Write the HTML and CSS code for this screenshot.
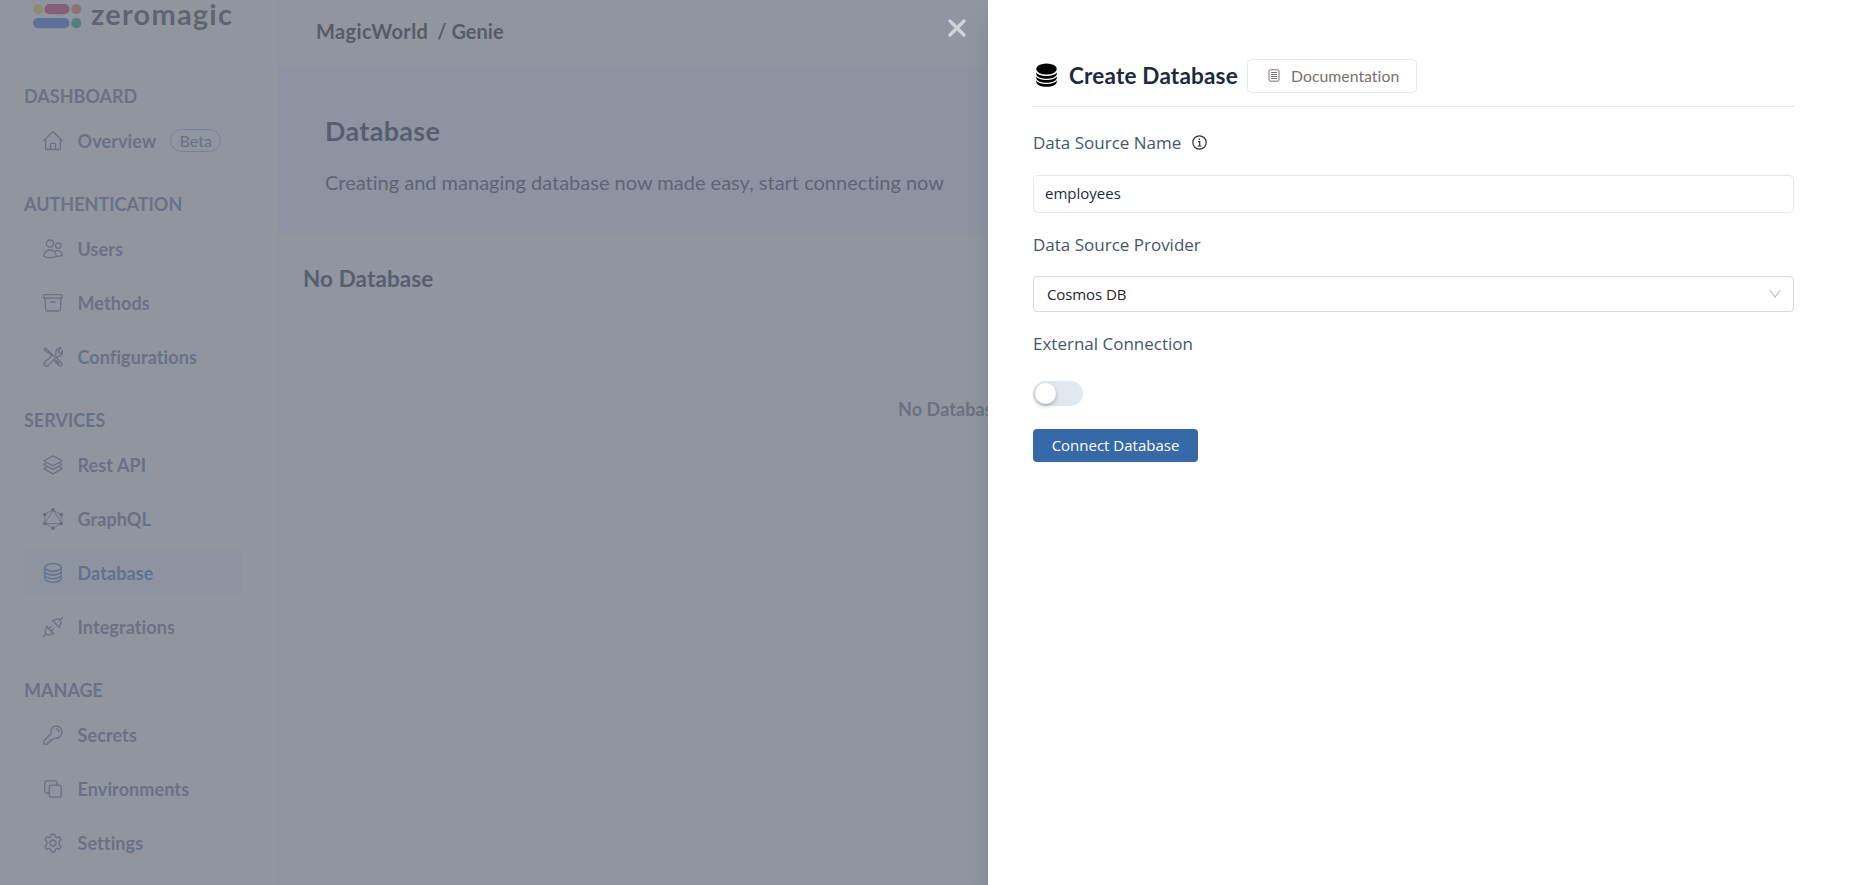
FILE: index.html
```html
<!DOCTYPE html>
<html lang="en">
<head>
    <meta charset="UTF-8">
    <meta name="viewport" content="width=device-width, initial-scale=1.0">
    <title>Database - zeromagic</title>
    <link rel="stylesheet" href="styles.css">
</head>
<body>

<div class="layout">
    <aside class="sidebar">
        <div class="logo">
            <svg width="49" height="25" viewBox="0 0 49 25">
                <circle cx="5.2" cy="5.2" r="5.1" fill="#f2d544"/>
                <rect x="11.5" y="0" width="25" height="10.3" rx="5.1" fill="#e0265e"/>
                <circle cx="43.3" cy="5.2" r="5.1" fill="#f07a3c"/>
                <rect x="0" y="14" width="36.5" height="10.3" rx="5.1" fill="#2f6fed"/>
                <circle cx="43.3" cy="19.1" r="5.1" fill="#14a085"/>
            </svg>
            <span class="logo-text">zeromagic</span>
        </div>

        <nav>
            <div class="nav-section">
                <h6>DASHBOARD</h6>
                <a class="nav-item">
                    <svg class="icon" viewBox="0 0 20 20"><path d="M.8 9.6 9.2 1.2a1.1 1.1 0 0 1 1.6 0l8.4 8.4M2.6 8v9.3c0 .7.5 1.2 1.2 1.2h12.4c.7 0 1.2-.5 1.2-1.2V8M7.5 18.5v-5.2c0-.6.4-1 1-1h3c.6 0 1 .4 1 1v5.2"/></svg>
                    Overview <span class="beta">Beta</span>
                </a>
            </div>
            <div class="nav-section">
                <h6>AUTHENTICATION</h6>
                <a class="nav-item">
                    <svg class="icon" viewBox="0 0 20 20"><circle cx="7" cy="4.6" r="3.6"/><circle cx="15.3" cy="6.6" r="2.7"/><path d="M.8 17.2c0-3.8 2.8-6.2 6.2-6.2s6.2 2.4 6.2 6.2c-1.800 1-3.900 1.500-6.200 1.500s-4.400-.5-6.200-1.500zM12 12.400c3.200-2 7.200 0 7.200 3.900-1.700.8-3.700 1.200-6 1"/></svg>
                    Users
                </a>
                <a class="nav-item">
                    <svg class="icon" viewBox="0 0 20 20"><rect x=".8" y="1.700" width="18.400" height="3.500" rx=".9"/><path d="m2 5.200.6 11c.1 1.100.8 1.800 1.900 1.800h11c1.100 0 1.800-.7 1.900-1.800l.6-11M7.700 9h4.600"/></svg>
                    Methods
                </a>
                <a class="nav-item">
                    <svg class="icon" viewBox="0 0 20 20"><path d="m11 9.600 2-2.200c-.9-3.800 1.700-7.200 5.200-6.300l-2.900 2.900.6 1.900 1.900.6 1.600-2.900c1 3.300-1.700 6.500-5.300 5.900l-9 8.900c-2.500 2.300-5.500-.7-3.400-3.100L8.600 9M8.600 8.400 5.300 5.200 4.900 3.500 2.600.9.900 2.600l2.500 2.300 1.800.4M11.600 13.800l4.300 4.400c2 1.700 4.300-.8 2.500-2.500L13.700 11M13 13.300l3 3M3.200 16.600h.1M5 3.500l5 5"/></svg>
                    Configurations
                </a>
            </div>
            <div class="nav-section">
                <h6>SERVICES</h6>
                <a class="nav-item">
                    <svg class="icon" viewBox="0 0 20 20"><path d="m10 .9 9.200 4.900-9.200 4.900L.8 5.800zM3.900 7.800.8 9.500l9.200 4.900 9.200-4.900-3.100-1.700M3.900 12 .8 13.900l9.200 5 9.200-5-3.100-1.900"/></svg>
                    Rest API
                </a>
                <a class="nav-item">
                    <svg class="icon icon-graph" viewBox="0 0 20 22"><path d="m10 2 8.200 4.600v9L10 20.200l-8.200-4.600v-9zM10 2 1.800 15.600h16.400z"/><g class="dots"><circle cx="10" cy="2" r="1.900"/><circle cx="18.200" cy="6.600" r="1.900"/><circle cx="18.200" cy="15.600" r="1.900"/><circle cx="10" cy="20.200" r="1.900"/><circle cx="1.800" cy="15.600" r="1.900"/><circle cx="1.800" cy="6.600" r="1.900"/></g></svg>
                    GraphQL
                </a>
                <a class="nav-item active">
                    <svg class="icon" viewBox="0 0 20 20"><ellipse cx="10" cy="4.500" rx="8.200" ry="3.800"/><path d="M1.800 4.500v11c0 2.100 3.700 3.800 8.200 3.800s8.200-1.700 8.200-3.800v-11M1.800 8.200c0 2.100 3.700 3.800 8.200 3.800s8.200-1.700 8.200-3.800M1.800 11.900c0 2.100 3.700 3.800 8.200 3.800s8.200-1.700 8.200-3.800"/></svg>
                    Database
                </a>
                <a class="nav-item">
                    <svg class="icon" viewBox="0 0 20 20"><path d="m.5 19.500 2.700-2.700M19.500.5l-2.700 2.700M3.300 9.300l7.400 7.400M9.300 3.300l7.400 7.400M4.400 10.400l-1.300 1.300a3.600 3.600 0 0 0 5.200 5.200l1.300-1.300M10.400 4.400l1.300-1.300a3.600 3.600 0 0 1 5.200 5.200l-1.300 1.300M5.800 11.800l2-2M8.200 14.200l2-2"/></svg>
                    Integrations
                </a>
            </div>
            <div class="nav-section">
                <h6>MANAGE</h6>
                <a class="nav-item">
                    <svg class="icon" viewBox="0 0 20 20"><path d="M13.500.8a5.700 5.700 0 0 0-5.600 7c.1.600 0 1.100-.4 1.500l-6 6c-.5.500-.7.900-.7 1.500v2.400h4.100v-2h2.100v-2h2l1.600-1.600c.4-.4.9-.5 1.500-.4A5.700 5.700 0 1 0 13.500.8zM13.200 4c1.800.1 2.800 1.200 2.900 2.900"/></svg>
                    Secrets
                </a>
                <a class="nav-item">
                    <svg class="icon" viewBox="0 0 20 20"><rect x="6.200" y="6.200" width="12" height="12" rx="2.200"/><path d="M6.200 14H4c-1.300 0-2.200-.9-2.200-2.200V4c0-1.300.9-2.200 2.200-2.200h7.800c1.300 0 2.200.9 2.200 2.200v2.200"/></svg>
                    Environments
                </a>
                <a class="nav-item">
                    <svg class="icon" viewBox="0 0 20 20"><circle cx="10" cy="10" r="3"/><path d="M8.300 1.200h3.400l.5 2.400 1.700 1 2.400-.8 1.700 2.900-1.800 1.700v3.200l1.800 1.700-1.700 2.900-2.400-.8-1.700 1-.5 2.400H8.300l-.5-2.400-1.700-1-2.400.8L2 13.300l1.800-1.700V8.400L2 6.700l1.700-2.900 2.400.8 1.700-1z"/></svg>
                    Settings
                </a>
            </div>
        </nav>
    </aside>

    <main class="main">
        <header class="topbar"><span>MagicWorld</span><span class="project">/ Genie</span></header>
        <section class="hero">
            <h1>Database</h1>
            <p>Creating and managing database now made easy, start connecting now</p>
        </section>
        <section class="content">
            <h2>No Database</h2>
            <p class="empty">No Database</p>
        </section>
    </main>
</div>

<div class="overlay">
    <button class="close" aria-label="Close">
        <svg width="18" height="18" viewBox="0 0 18 18"><path d="m2 2 14 14M16 2 2 16"/></svg>
    </button>
    <div class="drawer">
        <div class="drawer-header">
            <svg class="db-icon" width="21" height="25" viewBox="0 0 21 25">
                <ellipse cx="10.500" cy="6" rx="10.300" ry="5.600"/>
                <path d="M.2 9.200c2 5 18.600 5 20.600 0v2c-1.500 6-19.100 6-20.600 0zM.2 13.200c2 5 18.600 5 20.600 0v2c-1.500 6-19.100 6-20.600 0zM.2 17.200c2 5 18.600 5 20.600 0v2c-1.500 6.200-19.100 6.200-20.600 0z"/>
            </svg>
            <h3>Create Database</h3>
            <a class="doc-button">
                <svg width="12" height="13" viewBox="0 0 12 13"><rect x="1" y=".8" width="10" height="11.400" rx="1.500"/><path d="M3 3.500h6M3 5.500h6M3 7.500h6M3 9.500h6"/></svg>
                Documentation
            </a>
        </div>

        <form>
            <label class="field-label" for="name">
                Data Source Name
                <svg class="info" width="15" height="15" viewBox="0 0 15 15"><circle cx="7.500" cy="7.500" r="6.700"/><path d="M6 6.600h1.700v4.200M5.700 11h3.800M7.400 3.400v1.500"/></svg>
            </label>
            <input type="text" id="name" value="employees">
            <label class="field-label">Data Source Provider</label>
            <div class="select">
                <span>Cosmos DB</span>
                <svg width="12" height="10" viewBox="0 0 12 10"><path d="m.7 1 5.300 7 5.300-7"/></svg>
            </div>
            <label class="field-label">External Connection</label>
            <div class="switch"><div class="knob"></div></div>
            <button type="button" class="submit">Connect Database</button>
        </form>
    </div>
</div>

</body>
</html>
```
FILE: styles.css
```css
* {
    box-sizing: border-box;
}

body {
    margin: 0;
    height: 100vh;
    overflow: hidden;
    background: #fff;
    font-family: Lato, sans-serif;
    font-variant-ligatures: none;
    color: #1e293b;
}

h1, h2, h3, h6, p {
    margin: 0;
}

.layout {
    display: flex;
    height: 100vh;
}

/* Sidebar */
.sidebar {
    flex: none;
    width: 279px;
    padding: 0 36px 0 24px;
    border-right: 1px solid #f3f4f6;
}

.logo {
    display: flex;
    align-items: center;
    height: 32px;
    margin-bottom: 51px;
    padding-left: 9px;
}

.logo-text {
    margin: -5px 0 0 9px;
    font-size: 29px;
    font-weight: 700;
    line-height: 24px;
    letter-spacing: 1.2px;
    color: #3f3f46;
}

.nav-section {
    margin-bottom: 28px;
}

.nav-section h6 {
    height: 27px;
    margin-bottom: 8px;
    font-size: 18px;
    font-weight: 700;
    line-height: 27px;
    color: #64748b;
}

.nav-item {
    display: flex;
    align-items: center;
    height: 45px;
    margin-bottom: 9px;
    padding-left: 19px;
    border-radius: 4px;
    font-size: 18px;
    font-weight: 700;
    letter-spacing: 0.1px;
    color: #64748b;
}

.nav-item.active {
    background: #f2f8fc;
    color: #3f78b5;
}

.icon {
    width: 20px;
    height: 20px;
    margin-right: 14.5px;
    fill: none;
    stroke: currentColor;
    stroke-width: 1.3;
    stroke-linecap: round;
    stroke-linejoin: round;
}

.icon-graph {
    height: 22px;
    stroke-width: 0.9;
}

.dots {
    fill: currentColor;
    stroke: none;
}

.beta {
    height: 23px;
    margin-left: 14px;
    padding: 0 8px;
    border: 1px solid #93b4f5;
    border-radius: 12px;
    font-size: 16px;
    font-weight: 400;
    line-height: 21px;
}

/* Page behind the drawer */
.main {
    flex: 1;
}

.topbar {
    display: flex;
    height: 67px;
    padding: 19px 0 0 37px;
    border-bottom: 1px solid #f3f4f6;
    font-size: 20px;
    font-weight: 700;
    line-height: 25px;
    letter-spacing: 0.4px;
    color: #18181b;
}

.topbar .project {
    margin-left: 9px;
    letter-spacing: 0;
}

.hero {
    height: 167px;
    padding: 46px;
    background: #f1f8fd;
}

.hero h1 {
    font-size: 27px;
    line-height: 36px;
    letter-spacing: 0.3px;
}

.hero p {
    margin-top: 19px;
    font-size: 20px;
    line-height: 28px;
    color: #334155;
}

.content {
    padding: 29px 24px;
}

.content h2 {
    font-size: 22.5px;
    line-height: 32px;
    letter-spacing: 0.1px;
}

.empty {
    margin-top: 100px;
    padding-left: 595px;
    font-size: 18px;
    font-weight: 700;
    line-height: 28px;
    letter-spacing: 0.1px;
    color: #6b7280;
}

/* Drawer */
.overlay {
    position: absolute;
    inset: 0;
    display: flex;
    justify-content: flex-end;
    background: rgba(107, 114, 128, 0.75);
}

.close {
    height: 18px;
    margin: 18.500px 22.500px 0 0;
    padding: 0;
    border: none;
    background: none;
}

.close svg {
    display: block;
    stroke: #d1d5db;
    stroke-width: 3.2;
    stroke-linecap: round;
}

.drawer {
    width: 861px;
    padding: 59px 55px 0 45px;
    background: #fff;
    box-shadow: 0 20px 25px rgba(0, 0, 0, 0.1);
}

.drawer-header {
    display: flex;
    align-items: flex-start;
    height: 48px;
    padding-left: 3px;
    border-bottom: 1px solid #e5e7eb;
}

.db-icon {
    margin: 4px 12px 0 0;
    fill: #000;
}

.drawer-header h3 {
    width: 178px;
    font-size: 22.5px;
    line-height: 33px;
    letter-spacing: 0.2px;
    white-space: nowrap;
}

.doc-button {
    display: flex;
    align-items: center;
    width: 170px;
    height: 34px;
    padding: 0 0 1px 20px;
    border: 1px solid #e5e7eb;
    border-radius: 4px;
    font-size: 15.75px;
    letter-spacing: 0.05px;
    color: #78716c;
}

.doc-button svg {
    margin-right: 11px;
    fill: none;
    stroke: #78716c;
}

form {
    font-family: "Open Sans", sans-serif;
}

.field-label {
    display: flex;
    align-items: center;
    height: 28px;
    padding-bottom: 1px;
    font-size: 17px;
    color: #475569;
}

form > .field-label:first-child {
    margin-top: 22px;
}

.info {
    margin-left: 11px;
    fill: none;
    stroke: #333;
    stroke-width: 1.2;
}

input {
    display: block;
    width: 100%;
    height: 38px;
    margin: 18px 0;
    padding: 0 11px 2px;
    border: 1px solid #e2e8f0;
    border-radius: 5px;
    font: 15px "Open Sans", sans-serif;
    color: #1e293b;
}

.select {
    display: flex;
    align-items: center;
    justify-content: space-between;
    height: 36px;
    margin: 17px 0 18px;
    padding: 0 12px 0 13px;
    border: 1px solid #d9d9d9;
    border-radius: 4px;
    font-size: 15px;
    letter-spacing: -0.1px;
    color: #262626;
}

.select svg {
    fill: none;
    stroke: #bfbfbf;
    stroke-width: 1.2;
}

.switch {
    width: 50px;
    height: 25px;
    margin: 23px 0;
    padding: 2px;
    border-radius: 13px;
    background: #e2e8f0;
}

.knob {
    width: 21px;
    height: 21px;
    border-radius: 50%;
    background: #fff;
    box-shadow: 0 2px 4px rgba(0, 35, 11, 0.3);
}

.submit {
    display: block;
    width: 165px;
    height: 33px;
    padding: 0 0 1px;
    border: none;
    border-radius: 4px;
    background: #3569a8;
    font: 15px "Open Sans", sans-serif;
    color: #fff;
}
```
